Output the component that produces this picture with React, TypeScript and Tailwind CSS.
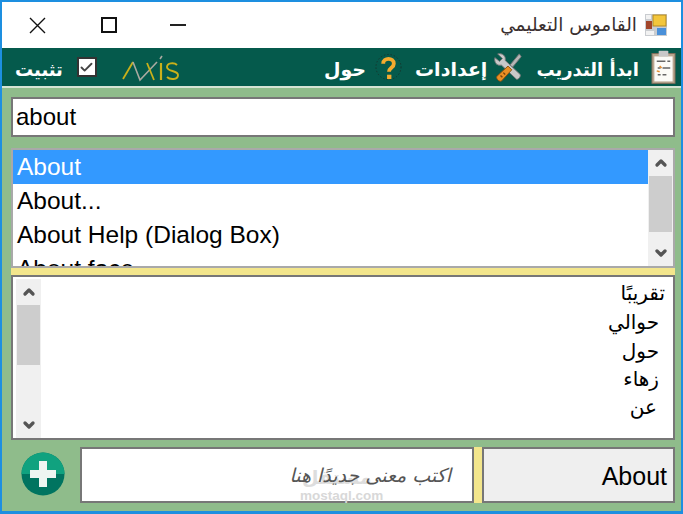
import React from "react";
import { Check, ChevronDown, ChevronUp } from "lucide-react";

const arabic = "font-['DejaVu_Sans','Noto_Sans',sans-serif]";

function ScrollBar({ thumbTop, thumbHeight }: { thumbTop: string; thumbHeight: string }) {
  return (
    <div className="flex h-full w-[25px] shrink-0 flex-col items-center bg-[#f0f0f0]">
      <div className={`flex w-full shrink-0 items-center justify-center ${thumbTop}`}>
        <ChevronUp className="h-[16px] w-[16px] text-[#555555]" strokeWidth={5} />
      </div>
      <div className={`w-[23px] shrink-0 bg-[#cdcdcd] ${thumbHeight}`} />
      <div className="flex flex-1 items-end justify-center pb-[5px]">
        <ChevronDown className="h-[16px] w-[16px] text-[#555555]" strokeWidth={5} />
      </div>
    </div>
  );
}

function AppIcon() {
  return (
    <svg width="22" height="22" viewBox="0 0 22 22" className="shrink-0">
      <rect width="22" height="22" fill="#c9ccd0" />
      <rect x="8" y="1" width="13" height="11" fill="#f3c63c" stroke="#b58a22" />
      <rect x="1" y="7" width="6" height="8" fill="#a2452a" />
      <rect x="12" y="14" width="9" height="7" fill="#4a90d9" />
      <rect x="1" y="1" width="5" height="4" fill="#f2f2f2" />
      <rect x="1" y="17" width="8" height="4" fill="#f2f2f2" />
    </svg>
  );
}

function ClipboardIcon() {
  return (
    <svg width="25" height="36" viewBox="0 0 26 36" className="shrink-0">
      <rect x="1" y="4" width="24" height="31" fill="#b9a68f" stroke="#7f6d5a" />
      <rect x="3.5" y="7" width="19" height="26" fill="#fbfbf7" />
      <rect x="8" y="1" width="10" height="6" rx="1" fill="#c8c8c8" />
      <path d="M6 12h9M17 12h3M7 19h3M12 19h8M7 26h3M12 26h4" stroke="#666" strokeWidth="1.5" />
      <path d="M9 17l2 2M6 22l3 1" stroke="#e28a2b" strokeWidth="1.5" />
    </svg>
  );
}

function ToolsIcon() {
  return (
    <svg width="30" height="30" viewBox="0 0 32 32" className="shrink-0">
      <path d="M5 2c5-1 9 2 8 7l16 15c1 2-2 6-4 5L9 14C4 15 1 11 2 6l5 4 3-3z" fill="#c9c9c9" stroke="#777" />
      <path d="M28 2l2 3-9 11-3-2z" fill="#b5b5b5" stroke="#777" />
      <path d="M16 15l4 4-11 12c-2 1-6-2-5-5z" fill="#e98f24" stroke="#8a4f10" />
      <path d="M8 25l2 2M11 22l2 2" stroke="#7a420c" strokeWidth="1.5" />
    </svg>
  );
}

function HelpIcon() {
  return (
    <svg width="27" height="32" viewBox="0 0 28 32" className="shrink-0">
      <circle cx="14" cy="16" r="13" fill="none" stroke="#16352c" strokeWidth="1" strokeDasharray="1.5 2" />
      <path d="M8.5 12.5c0-6.5 11-6.5 11 0 0 4.500-5 4-5 8.500" fill="none" stroke="#f5ab2e" strokeWidth="4" />
      <rect x="12.500" y="24" width="4.500" height="4.500" fill="#f5ab2e" />
    </svg>
  );
}

function AxisLogo() {
  return (
    <svg width="58" height="30" viewBox="0 0 58 30" className="shrink-0">
      <path d="M1 27L11 10" fill="none" stroke="#c9b01a" strokeWidth="1.8" />
      <path d="M11 10l7 18L35 10" fill="none" stroke="#a9a9a0" strokeWidth="1.6" />
      <path d="M25 11l7 17" fill="none" stroke="#c9b01a" strokeWidth="1.8" />
      <path d="M39 11v17" stroke="#c9b01a" strokeWidth="2.2" />
      <path d="M38 7l2-3" stroke="#a9a9a0" strokeWidth="1.6" />
      <path d="M55 13c-3-3-10-2-10 2 0 5 11 3 11 8 0 5-8 5-11 2" fill="none" stroke="#c9b01a" strokeWidth="1.9" />
    </svg>
  );
}

function PlusIcon() {
  return (
    <svg width="44" height="44" viewBox="0 0 44 44" className="shrink-0">
      <circle cx="22" cy="22" r="21.500" fill="#007460" />
      <path d="M0.5 22a21.500 21.500 0 0 1 43 0z" fill="#10a27f" />
      <path d="M18 9h8v9h9v8h-9v9h-8v-9H9v-8h9z" fill="#eef5f1" />
    </svg>
  );
}

export default function App() {
  return (
    <div className="flex h-[514px] w-[683px] flex-col overflow-hidden border-x-2 border-t-2 border-b-[3px] border-[#1d8fe0] bg-[#8fbc8b] font-['Liberation_Sans',sans-serif]">
      <div className="flex h-[46px] shrink-0 items-center justify-between bg-white pl-[27px] pr-[14px]">
        <div className="flex items-center">
          <svg width="17" height="17" viewBox="0 0 17 17" className="shrink-0">
            <path d="M1 1l15 15M16 1L1 16" stroke="#111111" strokeWidth="1.4" />
          </svg>
          <span className="ml-[55px] h-[16px] w-[16px] border-2 border-[#111111]" />
          <span className="ml-[53px] h-[2px] w-[16px] bg-[#222222]" />
        </div>
        <div className="flex items-center gap-[8px]">
          <span dir="rtl" className={`${arabic} text-[18.500px] text-[#3a3030]`}>القاموس التعليمي</span>
          <AppIcon />
        </div>
      </div>

      <div className="flex h-[40px] shrink-0 items-center justify-between border-b-2 border-[#d6e4d4] bg-[#055a4c] pl-[13px] pr-[5px] text-white">
        <div className="flex items-center">
          <span dir="rtl" className={`${arabic} pt-[5px] text-[18px] font-bold`}>تثبيت</span>
          <span className="ml-[14px] flex h-[20px] w-[20px] items-center justify-center border-2 border-[#333333] bg-white">
            <Check className="h-[15px] w-[15px] text-[#444444]" strokeWidth={3} />
          </span>
          <span className="ml-[25px]"><AxisLogo /></span>
        </div>
        <div className="flex items-center">
          <span dir="rtl" className={`${arabic} pt-[5px] text-[19px] font-bold`}>حول</span>
          <span className="ml-[9px]"><HelpIcon /></span>
          <span dir="rtl" className={`${arabic} ml-[13px] pt-[5px] text-[19px] font-bold`}>إعدادات</span>
          <span className="ml-[6px]"><ToolsIcon /></span>
          <span dir="rtl" className={`${arabic} ml-[13px] pt-[5px] text-[18px] font-bold`}>ابدأ التدريب</span>
          <span className="ml-[12px]"><ClipboardIcon /></span>
        </div>
      </div>

      <div className="flex min-h-0 flex-1 flex-col pl-[9px] pr-[6px] pt-[9px]">
        <input
          readOnly
          value="about"
          className="h-[40px] w-full shrink-0 border-2 border-[#777777] bg-white px-[3px] text-[24px] text-black outline-none"
        />

        <div className="mt-[11px] flex h-[120px] shrink-0 overflow-hidden border-2 border-[#a9a9a9] bg-white text-[24.500px] leading-[34px] text-black">
          <div className="min-w-0 flex-1 overflow-hidden">
            <div className="h-[34px] bg-[#3399ff] pl-[4px] text-white">About</div>
            <div className="pl-[4px]">About...</div>
            <div className="pl-[4px]">About Help (Dialog Box)</div>
            <div className="pl-[4px]">About face</div>
          </div>
          <ScrollBar thumbTop="h-[26px]" thumbHeight="h-[56px]" />
        </div>

        <div className="h-[7px] shrink-0 bg-[#f3e68c]" />

        <div className="flex h-[165px] shrink-0 overflow-hidden border-2 border-[#777777] bg-white">
          <div className="pl-[3px] pt-[2px]">
            <ScrollBar thumbTop="h-[26px]" thumbHeight="h-[60px]" />
          </div>
          <div dir="rtl" className={`${arabic} flex-1 pr-[8px] pt-[2px] text-[20px] leading-[28px] text-black`}>
            <div>تقريبًا</div>
            <div className="pr-[6px] pt-[1px]">حوالي</div>
            <div className="pr-[6px] pt-[1px]">حول</div>
            <div className="pr-[6px]">زهاء</div>
            <div className="pr-[8px]">عن</div>
          </div>
        </div>

        <div className="mt-[7px] flex h-[56px] shrink-0 items-stretch">
          <div className="flex w-[69px] shrink-0 items-center justify-center pb-[3px] pr-[6px]">
            <PlusIcon />
          </div>
          <div className="relative flex min-w-0 flex-[0_0_394px] items-center justify-end border-2 border-[#777777] bg-white pr-[21px]">
            <span className={`${arabic} absolute bottom-[10px] left-[220px] text-[19px] font-bold text-[#dddddd]`}>مستقل</span>
            <span dir="rtl" className={`${arabic} relative text-[19px] italic text-[#555555]`}>اكتب معنى جديدًا هنا</span>
            <span className="absolute bottom-0 left-[218px] text-[13.500px] font-bold leading-[10px] text-[#d8d8d8]">mostaql.com</span>
          </div>
          <div className="w-[8px] shrink-0 bg-[#f3e68c]" />
          <div className="flex flex-1 items-center justify-end border-2 border-[#777777] bg-[#efefef] pr-[6px] pt-[3px] text-[25px] text-black">
            About
          </div>
        </div>
      </div>
    </div>
  );
}
